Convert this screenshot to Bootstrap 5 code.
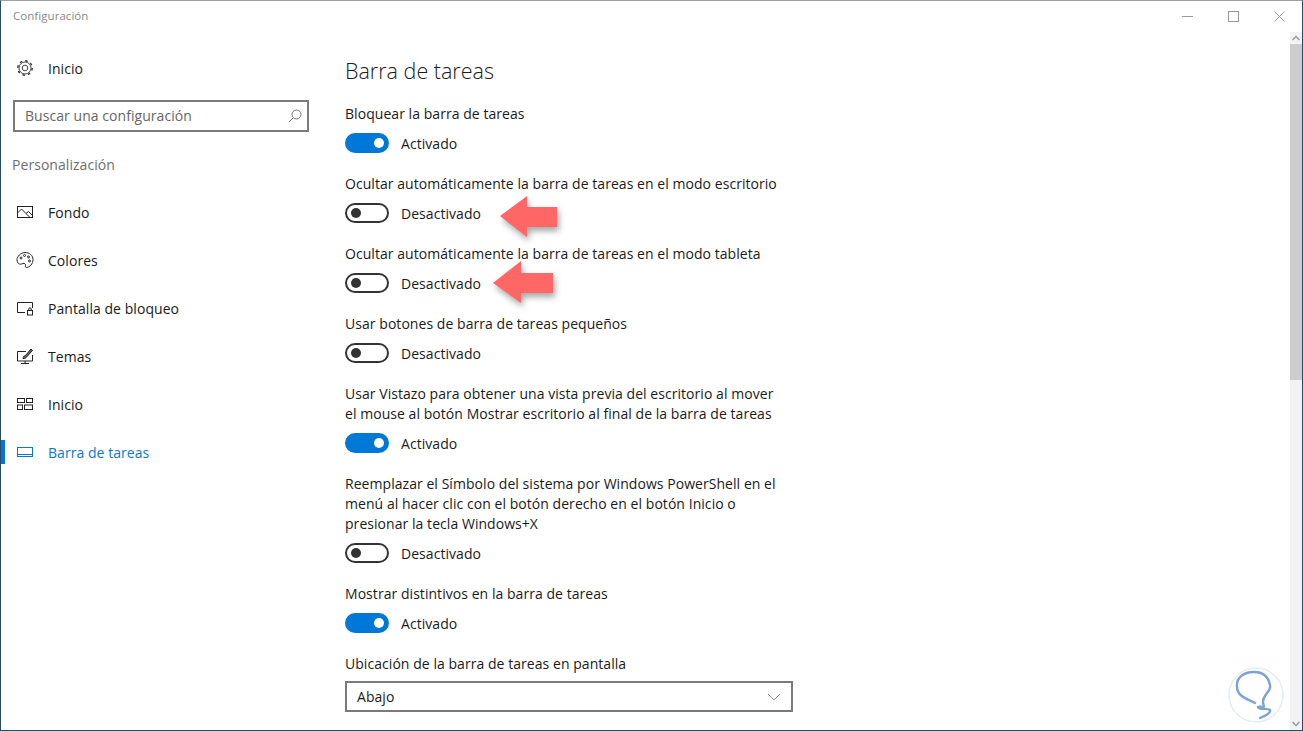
<!DOCTYPE html>
<html lang="es">
<head>
<meta charset="utf-8">
<title>Configuración</title>
<link href="https://cdn.jsdelivr.net/npm/bootstrap@5.3.0/dist/css/bootstrap.min.css" rel="stylesheet">
<style>
html,body{height:731px;overflow:hidden;margin:0;background:#fff}
body{font-family:"Open Sans","Noto Sans","Liberation Sans",sans-serif;font-size:14px;line-height:20px;color:#1a1a1a;letter-spacing:.05px}
.win{position:relative;width:1303px;height:731px;border-top:1px solid #a0a0a0;border-left:1px solid #2b4a68;border-right:1px solid #2b4a68;border-bottom:1px solid #2b4a68;overflow:hidden}
.tbar{height:31px;padding-left:12px}
.tbar-t{font-size:11.5px;color:#8a8a8a;line-height:30px}
.wb{width:46px;height:30px}
.body-wrap{height:698px}
.side{width:344px;flex:none}
.nav-it{height:48px;color:#1a1a1a;padding-left:15px;text-decoration:none;position:relative}
.nav-it svg{width:18px;height:18px;flex:none;margin-right:14px}
.nav-it.on{color:#0b78d0}
.nav-it.on::before{content:"";position:absolute;left:0;top:12px;width:4px;height:24px;background:#0078d7}
.tx{line-height:18px;padding-top:2px}
.searchb{margin:8px 0 0 12px;width:296px;height:32px;border:2px solid #7a7a7a;padding:0 5px 0 10px;color:#666}
.sec{margin:23px 0 13px 11px;color:#6e6e6e}
.main{flex:1;padding-top:25px}
.ttl{font-size:21.5px;line-height:28px;margin:0 0 19px;font-weight:300;color:#1a1a1a;letter-spacing:0}
.grp{margin-bottom:21px;width:440px}
.lbl{margin-bottom:9px}
.tgl{width:44px;height:20px;border-radius:10px;border:2px solid #333;flex:none;margin-right:12px;position:relative;background:#fff}
.tgl i{position:absolute;left:4px;top:3px;width:10px;height:10px;border-radius:50%;background:#333}
.tgl.act{background:#0078d7;border-color:#0078d7}
.tgl.act i{left:auto;right:3px;background:#fff}
.selb{width:448px;height:31px;border:2px solid #7a7a7a;padding:0 10px}
.sbar{width:12px;flex:none;background:#f2f2f2}
.sb-a{height:12px}
.sb-th{height:336px;background:#cdcdcd}
.arw{position:absolute;filter:drop-shadow(2px 4px 3px rgba(0,0,0,.35))}
.wm{position:absolute;left:1226px;top:665px;width:58px;height:58px}
</style>
</head>
<body>
<div class="win">
  <div class="tbar d-flex justify-content-between align-items-start">
    <div class="tbar-t">Configuración</div>
    <div class="d-flex">
      <div class="wb d-flex align-items-center justify-content-center"><svg width="11" height="11"><path d="M0 5.500H11" stroke="#999" fill="none"/></svg></div>
      <div class="wb d-flex align-items-center justify-content-center"><svg width="11" height="11"><rect x=".5" y=".5" width="10" height="10" stroke="#999" fill="none"/></svg></div>
      <div class="wb d-flex align-items-center justify-content-center"><svg width="11" height="11"><path d="M.5.5l10 10M10.500.5l-10 10" stroke="#999" fill="none"/></svg></div>
    </div>
  </div>
  <div class="body-wrap d-flex">
    <div class="side">
      <a class="nav-it d-flex align-items-center" style="margin-top:12px"><svg viewBox="0 0 18 18" fill="none" stroke="#333" stroke-width=".9"><circle cx="9" cy="9" r="2.800"/><circle cx="9" cy="9" r="6"/><circle cx="9" cy="9" r="7.200" stroke-width="1.400" stroke-dasharray="2.600 3.050"/></svg><span class="tx">Inicio</span></a>
      <div class="searchb d-flex align-items-center justify-content-between"><span>Buscar una configuración</span><svg width="14" height="14" viewBox="0 0 14 14" fill="none" stroke="#777"><circle cx="8.500" cy="5.500" r="4.500"/><path d="M5.300 8.700L.8 13.200"/></svg></div>
      <div class="sec">Personalización</div>
      <a class="nav-it d-flex align-items-center"><svg viewBox="0 0 18 18" fill="none" stroke="#222"><rect x="1.500" y="3.500" width="15" height="11"/><path d="M1.500 10l4-4 8.500 8.500M10 10.500l2.500-2 4 4"/></svg><span class="tx">Fondo</span></a>
      <a class="nav-it d-flex align-items-center"><svg viewBox="0 0 18 18" fill="none" stroke="#222"><path d="M9 1.500c4.500 0 8 3 8 7 0 4.500-3.500 8-6.500 8-1.500 0-1-1.500-1-2.500s-1-2-2.500-1.500-2 1-3.500.5S1 11 1 8.500 4.500 1.500 9 1.500z"/><circle cx="5" cy="7" r="1"/><circle cx="8.500" cy="4.500" r="1"/><circle cx="12.500" cy="6" r="1"/><circle cx="13.500" cy="10" r="1"/></svg><span class="tx">Colores</span></a>
      <a class="nav-it d-flex align-items-center"><svg viewBox="0 0 18 18" fill="none" stroke="#222"><path d="M9 13.500H1.500v-10h15v5.500"/><rect x="11.500" y="11.500" width="5" height="4.500"/><path d="M12.800 11.500V10a1.200 1.200 0 0 1 2.400 0v1.500"/></svg><span class="tx">Pantalla de bloqueo</span></a>
      <a class="nav-it d-flex align-items-center"><svg viewBox="0 0 18 18" fill="none" stroke="#222"><path d="M10 4.500H1.500v9.500h15V8M9 14v2.500M5 16.500h8"/><path d="M7 11.500c0-2 1-2.500 2.500-3L15 2l1.500 1.500L10.500 10c-.5 1-1.500 1.500-3.500 1.500z" fill="#666"/></svg><span class="tx">Temas</span></a>
      <a class="nav-it d-flex align-items-center"><svg viewBox="0 0 18 18" fill="none" stroke="#222"><rect x="1.500" y="3.500" width="7" height="4"/><rect x="10.500" y="3.500" width="6" height="4"/><rect x="1.500" y="10" width="5" height="4.500"/><rect x="8.500" y="10" width="8" height="4.500"/></svg><span class="tx">Inicio</span></a>
      <a class="nav-it on d-flex align-items-center"><svg viewBox="0 0 18 18" fill="none" stroke="#0b78d0"><rect x="1.500" y="4.500" width="15" height="9"/><path d="M1.500 11.500h15"/></svg><span class="tx">Barra de tareas</span></a>
    </div>
    <div class="main">
      <h1 class="ttl">Barra de tareas</h1>
      <div class="grp"><div class="lbl">Bloquear la barra de tareas</div><div class="d-flex align-items-center"><span class="tgl act"><i></i></span><span class="tx">Activado</span></div></div>
      <div class="grp"><div class="lbl">Ocultar automáticamente la barra de tareas en el modo escritorio</div><div class="d-flex align-items-center"><span class="tgl"><i></i></span><span class="tx">Desactivado</span></div></div>
      <div class="grp"><div class="lbl">Ocultar automáticamente la barra de tareas en el modo tableta</div><div class="d-flex align-items-center"><span class="tgl"><i></i></span><span class="tx">Desactivado</span></div></div>
      <div class="grp"><div class="lbl">Usar botones de barra de tareas pequeños</div><div class="d-flex align-items-center"><span class="tgl"><i></i></span><span class="tx">Desactivado</span></div></div>
      <div class="grp"><div class="lbl">Usar Vistazo para obtener una vista previa del escritorio al mover<br>el mouse al botón Mostrar escritorio al final de la barra de tareas</div><div class="d-flex align-items-center"><span class="tgl act"><i></i></span><span class="tx">Activado</span></div></div>
      <div class="grp"><div class="lbl">Reemplazar el Símbolo del sistema por Windows PowerShell en el<br>menú al hacer clic con el botón derecho en el botón Inicio o<br>presionar la tecla Windows+X</div><div class="d-flex align-items-center"><span class="tgl"><i></i></span><span class="tx">Desactivado</span></div></div>
      <div class="grp"><div class="lbl">Mostrar distintivos en la barra de tareas</div><div class="d-flex align-items-center"><span class="tgl act"><i></i></span><span class="tx">Activado</span></div></div>
      <div class="lbl" style="margin-bottom:7px">Ubicación de la barra de tareas en pantalla</div>
      <div class="selb d-flex align-items-center justify-content-between"><span>Abajo</span><svg width="14" height="8" viewBox="0 0 14 8" fill="none" stroke="#999"><path d="M1 1l6 6 6-6"/></svg></div>
    </div>
    <div class="sbar d-flex flex-column justify-content-between">
      <div>
        <div class="sb-a d-flex align-items-center justify-content-center"><svg width="8" height="6" viewBox="0 0 8 6" fill="none" stroke="#999" stroke-width="1.500"><path d="M.5 5L4 1.500 7.500 5"/></svg></div>
        <div class="sb-th"></div>
      </div>
      <div class="sb-a d-flex align-items-center justify-content-center"><svg width="8" height="6" viewBox="0 0 8 6" fill="none" stroke="#999" stroke-width="1.500"><path d="M.5 1L4 4.500 7.500 1"/></svg></div>
    </div>
  </div>
  <svg class="arw" style="left:497px;top:193px" width="64" height="46" viewBox="0 0 64 46"><path d="M2 22L29 2V13H59V33H29V43z" fill="#ff6666"/></svg>
  <svg class="arw" style="left:490px;top:258px" width="64" height="46" viewBox="0 0 64 46"><path d="M2 24L30 2V14H62V34H30V44z" fill="#ff6666"/></svg>
  <svg class="wm" viewBox="0 0 58 58"><circle cx="29" cy="29" r="27" fill="#fff" stroke="#e4ecf6" stroke-width="1.500"/><path d="M33 52C38 50 44 47 43 44C41 42 32 44 31 41C32 40 37 42 37 40C35 36 36 33 38 30C41 25 44 24 43 19C41 9 34 6 27 6C16 6 9 12 10 21C10 30 20 33 28 37" fill="none" stroke="#7ba3d6" stroke-width="2.400" stroke-linecap="round"/></svg>
</div>
</body>
</html>
